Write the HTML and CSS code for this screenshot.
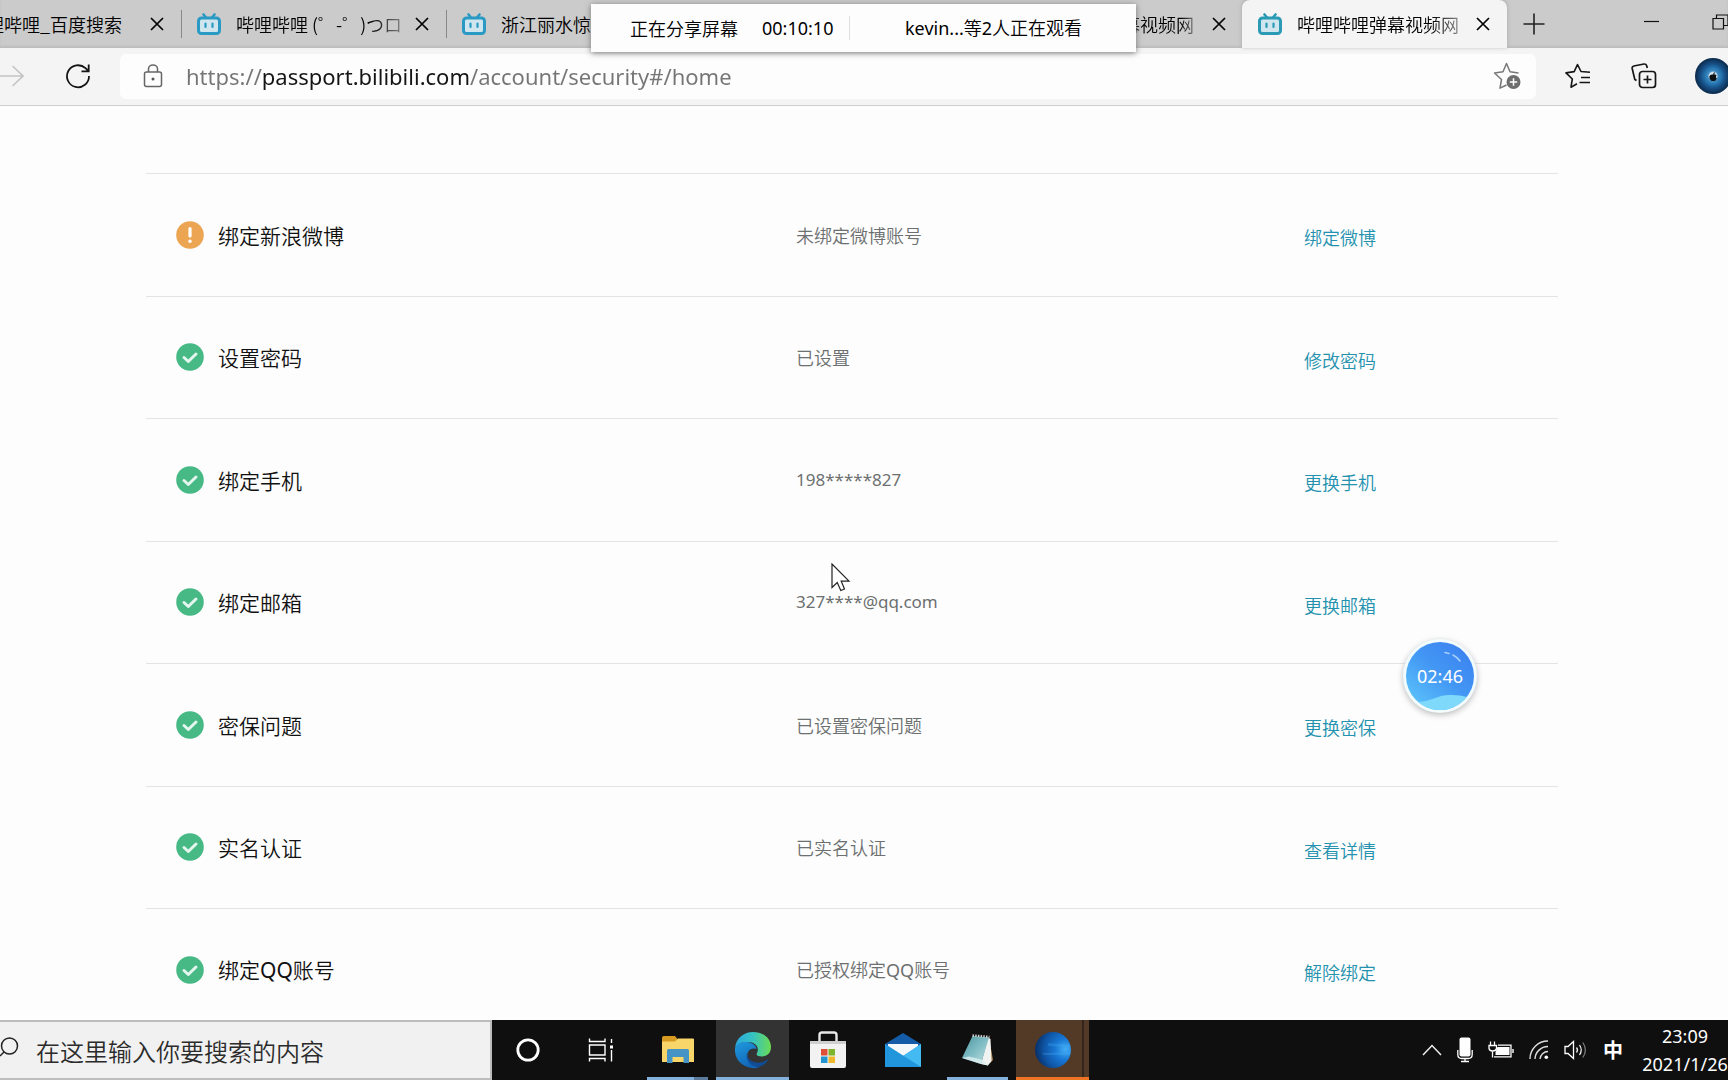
FILE: index.html
```html
<!DOCTYPE html>
<html lang="zh-CN">
<head>
<meta charset="utf-8">
<title>哔哩哔哩弹幕视频网</title>
<link rel="stylesheet" href="styles.css">
</head>
<body>
<svg class="defs" aria-hidden="true">
  <symbol id="tv" viewBox="0 0 24 22">
    <path d="M6.500 1.500 9 4.500M17.500 1.500 15 4.500" fill="none" stroke="currentColor" stroke-width="2.600" stroke-linecap="round"/>
    <rect x="1.500" y="5" width="21" height="15.500" rx="3" fill="#cfe6ee" stroke="currentColor" stroke-width="3"/>
    <path d="M8.500 10.500v3.500M15.500 10.500v3.500" stroke="currentColor" stroke-width="2.200" stroke-linecap="round"/>
  </symbol>
  <symbol id="close" viewBox="0 0 14 14">
    <path d="M1 1 13 13M13 1 1 13" fill="none" stroke="currentColor" stroke-width="1.700"/>
  </symbol>
  <symbol id="ok" viewBox="0 0 28 28">
    <circle cx="14" cy="14" r="13.800" fill="#46b985"/>
    <path d="M8 14.500 12.300 18.500 20 11" fill="none" stroke="#e4f6ee" stroke-width="3" stroke-linecap="round" stroke-linejoin="round"/>
  </symbol>
  <symbol id="warn" viewBox="0 0 28 28">
    <circle cx="14" cy="14" r="13.800" fill="#eba553"/>
    <path d="M14 7.500v7.500" stroke="#fff" stroke-width="3.200" stroke-linecap="round"/>
    <circle cx="14" cy="20.300" r="1.700" fill="#fff"/>
  </symbol>
</svg>

<header class="browser">
  <div class="tabstrip">
    <div class="tabs">
      <div class="tab tab-first"><span class="tab-title">哔哩哔哩_百度搜索</span><button class="icon-btn" aria-label="关闭"><svg width="14" height="14"><use href="#close"/></svg></button></div>
      <div class="tab"><svg class="favicon" width="24" height="22"><use href="#tv"/></svg><span class="tab-title fade">哔哩哔哩 (゜-゜)つロ</span><button class="icon-btn" aria-label="关闭"><svg width="14" height="14"><use href="#close"/></svg></button></div>
      <div class="tab"><svg class="favicon" width="24" height="22"><use href="#tv"/></svg><span class="tab-title">浙江丽水惊</span></div>
      <div class="tab"></div>
      <div class="tab tab-covered"><span class="tab-title fade">幕视频网</span><button class="icon-btn" aria-label="关闭"><svg width="14" height="14"><use href="#close"/></svg></button></div>
      <div class="tab active"><svg class="favicon" width="24" height="22"><use href="#tv"/></svg><span class="tab-title fade">哔哩哔哩弹幕视频网</span><button class="icon-btn" aria-label="关闭"><svg width="14" height="14"><use href="#close"/></svg></button></div>
    </div>
    <button class="icon-btn new-tab" aria-label="新建标签页"><svg width="22" height="22" viewBox="0 0 22 22"><path d="M11 0.500v21M0.500 11h21" stroke="#222" stroke-width="1.600"/></svg></button>
    <div class="window-btns">
      <button class="icon-btn" aria-label="最小化"><svg width="16" height="16" viewBox="0 0 16 16"><path d="M0 7.500h15" stroke="#111" stroke-width="1.200"/></svg></button>
      <button class="icon-btn" aria-label="还原"><svg width="16" height="16" viewBox="0 0 16 16"><path d="M1 4.500h10.500V15H1zM4.500 4.500V1H16v10.500h-4" fill="none" stroke="#111" stroke-width="1.200"/></svg></button>
    </div>
  </div>

  <div class="toolbar">
    <button class="icon-btn forward" aria-label="前进"><svg width="24" height="22" viewBox="0 0 24 22"><path d="M0 11h23M12.500 1 23 11 12.500 21" fill="none" stroke="#c4c4c4" stroke-width="1.600"/></svg></button>
    <button class="icon-btn reload" aria-label="刷新"><svg width="26" height="26" viewBox="0 0 26 26"><path d="M24 13A11 11 0 1 1 20.500 5.200L23.500 8M23.700 1.500V8.300H16.500" fill="none" stroke="#151515" stroke-width="1.800"/></svg></button>
    <label class="omnibox">
      <svg width="20" height="24" viewBox="0 0 20 24"><rect x="1.500" y="8" width="17" height="14.500" rx="2" fill="none" stroke="#666" stroke-width="1.500"/><path d="M5.500 8V5a4.500 4 0 0 1 9 0v3" fill="none" stroke="#666" stroke-width="1.500"/><circle cx="10" cy="15" r="1.500" fill="#555"/></svg>
      <input class="url" type="text" aria-label="地址栏" value="https://passport.bilibili.com/account/security#/home">
      <button class="icon-btn" aria-label="添加到收藏夹"><svg width="28" height="28" viewBox="0 0 28 28"><path d="M13.500 23 7 26.200 8.500 17.500 1.500 11 10 9.800 13.500 1.500 17 9.800 25.500 11" fill="none" stroke="#777" stroke-width="1.500" stroke-linejoin="round"/><circle cx="20.500" cy="20" r="7" fill="#6e6e6e"/><path d="M20.500 16.300v7.400M16.800 20h7.400" stroke="#fff" stroke-width="1.500"/></svg></button>
    </label>
    <button class="icon-btn favorites" aria-label="收藏夹"><svg width="26" height="26" viewBox="0 0 26 26"><path d="M12 20.800 6 24.200 7.300 16 1 9.900 9.200 8.600 12.500 1.500 16 8.500 25 9.300M16 14.500h9M14.500 19.500h10.500" fill="none" stroke="#151515" stroke-width="1.600" stroke-linejoin="round"/></svg></button>
    <button class="icon-btn collections" aria-label="集锦"><svg width="26" height="26" viewBox="0 0 26 26"><rect x="8.500" y="8.500" width="16" height="16" rx="3" fill="none" stroke="#151515" stroke-width="1.700"/><path d="M16.500 12.500v8M12.500 16.500h8M5.500 17.500 3.800 16.500 1.200 5.500Q0.800 3.500 2.800 3L13 1Q15 0.800 15.600 2.600L16.300 5" fill="none" stroke="#151515" stroke-width="1.700"/></svg></button>
    <button class="icon-btn avatar" aria-label="个人资料"><svg width="8" height="9" viewBox="0 0 8 9"><path d="M4 2.500Q4 .5 6 0 6 2 4 2.500Q6 1.800 7.500 3.200 6 5 7.800 6.500 6.500 9 5.500 9H2.500Q0 7 .3 4.500 1 2 4 2.500z" fill="#0c1116"/></svg></button>
  </div>
</header>

<div class="share-bar">
  <span>正在分享屏幕</span>
  <span class="share-time">00:10:10</span>
  <span class="share-viewers"><span class="latin">kevin...</span>等<span class="latin">2</span>人正在观看</span>
</div>

<main class="page">
  <ul class="settings">
    <li class="row"><h2 class="name"><svg width="28" height="28"><use href="#warn"/></svg>绑定新浪微博</h2><p class="value">未绑定微博账号</p><a class="action" href="#weibo">绑定微博</a></li>
    <li class="row"><h2 class="name"><svg width="28" height="28"><use href="#ok"/></svg>设置密码</h2><p class="value">已设置</p><a class="action" href="#password">修改密码</a></li>
    <li class="row"><h2 class="name"><svg width="28" height="28"><use href="#ok"/></svg>绑定手机</h2><p class="value masked">198*****827</p><a class="action" href="#phone">更换手机</a></li>
    <li class="row"><h2 class="name"><svg width="28" height="28"><use href="#ok"/></svg>绑定邮箱</h2><p class="value masked">327****@qq.com</p><a class="action" href="#mail">更换邮箱</a></li>
    <li class="row"><h2 class="name"><svg width="28" height="28"><use href="#ok"/></svg>密保问题</h2><p class="value">已设置密保问题</p><a class="action" href="#question">更换密保</a></li>
    <li class="row"><h2 class="name"><svg width="28" height="28"><use href="#ok"/></svg>实名认证</h2><p class="value">已实名认证</p><a class="action" href="#realname">查看详情</a></li>
    <li class="row"><h2 class="name"><svg width="28" height="28"><use href="#ok"/></svg><span>绑定<span class="latin">QQ</span>账号</span></h2><p class="value">已授权绑定<span class="latin">QQ</span>账号</p><a class="action" href="#qq">解除绑定</a></li>
  </ul>
</main>

<div class="timer-ball">
  <svg class="ball-art" width="68" height="68" viewBox="0 0 68 68" aria-hidden="true">
    <defs>
      <linearGradient id="ball" x1="0.900" y1="0.100" x2="0.200" y2="0.900"><stop offset="0" stop-color="#3b82f0"/><stop offset="0.500" stop-color="#4397f4"/><stop offset="1" stop-color="#58bdfa"/></linearGradient>
      <clipPath id="ballclip"><circle cx="34" cy="34" r="34"/></clipPath>
    </defs>
    <g clip-path="url(#ballclip)">
      <rect width="68" height="68" fill="url(#ball)"/>
      <path d="M10 60C26 60 32 52 46 53Q56 53 64 56V68H10z" fill="#7fd9fb"/>
    </g>
    <path d="M39 10.500 43 11.500M47 13Q51 15 54 19" stroke="#a5cffb" stroke-width="1.600" fill="none" stroke-linecap="round"/>
  </svg>
  <span class="ball-time">02:46</span>
</div>

<svg class="pointer" width="20" height="30" viewBox="0 0 20 30" aria-hidden="true"><path d="M1 1V24.500L6.200 19.500 9.800 27.500 13.500 26 10.200 18.200H18z" fill="#fff" stroke="#222" stroke-width="1.200"/></svg>

<footer class="taskbar">
  <label class="search">
    <svg width="19" height="20" viewBox="0 0 19 20"><circle cx="9.500" cy="9" r="8" fill="none" stroke="#222" stroke-width="1.500"/><path d="M4 15 0 19" stroke="#222" stroke-width="1.500"/></svg>
    <input type="search" aria-label="搜索" placeholder="在这里输入你要搜索的内容">
  </label>
  <nav class="apps">
    <button class="app" aria-label="Cortana"><svg width="26" height="26" viewBox="0 0 26 26"><circle cx="13" cy="13" r="10.200" fill="none" stroke="#fff" stroke-width="2.800"/></svg></button>
    <button class="app" aria-label="任务视图"><svg width="26" height="24" viewBox="0 0 26 24"><path d="M1.500 0.500V3.500H17V0.500M1.500 23.500V20.500H17V23.500M1.500 7h15.500v10H1.500zM23.500 1v4M23.500 12v11.500" fill="none" stroke="#fff" stroke-width="1.400"/><rect x="22" y="7.500" width="3" height="3" fill="#fff"/></svg></button>
    <button class="app running grouped" aria-label="文件资源管理器"><svg width="34" height="30" viewBox="0 0 34 30"><path d="M1 3Q1 1 3 1h11l2.500 3v5H1z" fill="#d79b22"/><path d="M1 6.500H14L17 3.500H32a1 1 0 0 1 1 1V27H1z" fill="#f9d66a"/><path d="M6 28V15.500a1.500 1.500 0 0 1 1.500-1.500h19a1.500 1.500 0 0 1 1.500 1.500V28h-5.500v-6h-11v6z" fill="#4694c6"/></svg></button>
    <button class="app running current" aria-label="Microsoft Edge"><svg width="38" height="38" viewBox="0 0 38 38">
      <defs>
        <linearGradient id="e1" x1="0" y1="0.500" x2="1" y2="0.500"><stop offset="0" stop-color="#2aa7dd"/><stop offset="0.500" stop-color="#36c2c2"/><stop offset="1" stop-color="#6bdc52"/></linearGradient>
        <linearGradient id="e2" x1="0" y1="0" x2="0.500" y2="1"><stop offset="0" stop-color="#1f9be0"/><stop offset="1" stop-color="#1264b5"/></linearGradient>
      </defs>
      <path d="M1 17C2 7 10 1 19 1c11 0 18 7 18 15 0 6-4 9.500-9 9.500-4 0-6.500-1-5-3.500 3-6-2-11-9-11C8 11 3 13 1 17z" fill="url(#e1)"/>
      <path d="M1 17C3 12.500 8 10.500 13 11c5 .5 9 3 9.500 7-5-2-10 2-9 7.500C14.500 32 20 36 26 35.500 23.500 37 21 37.500 18 37 7 36 0 27 1 17z" fill="url(#e2)"/>
      <path d="M13 22c0 7 7 10.500 13 9.500 4-.5 7-2.500 9-4-2 4-6 7.500-10 8.500C17 36.500 11 29 13 22z" fill="#114d94"/>
    </svg></button>
    <button class="app" aria-label="Microsoft Store"><svg width="36" height="38" viewBox="0 0 36 38"><path d="M9.500 13V4a2.500 2.500 0 0 1 2.500-2.500h12A2.500 2.500 0 0 1 26.500 4v9" fill="none" stroke="#e9e9e9" stroke-width="2.400"/><path d="M0 10h36v25a2 2 0 0 1-2 2H2a2 2 0 0 1-2-2z" fill="#f2f2f2"/><path d="M0 10h36v3H0z" fill="#cfcfcf"/><path d="M11 18h6.500v6.500H11z" fill="#dd5037"/><path d="M18.500 18H25v6.500h-6.500z" fill="#7db52c"/><path d="M11 25.500h6.500V32H11z" fill="#2294d0"/><path d="M18.500 25.500H25V32h-6.500z" fill="#f0b92b"/></svg></button>
    <button class="app" aria-label="邮件"><svg width="38" height="36" viewBox="0 0 38 36"><path d="M1 12 19 1 37 12V20H1z" fill="#155ca8"/><path d="M4 12h30v10L19 26 4 22z" fill="#f5f8fb"/><path d="M1 12 19 24 37 12V34a1 1 0 0 1-1 1H2a1 1 0 0 1-1-1z" fill="#2fa6e8"/><path d="M1 34.500 19 24 37 12V34a1 1 0 0 1-1 1z" fill="#43baf1"/><path d="M1 12 37 35H2a1 1 0 0 1-1-1z" fill="#2196dc"/></svg></button>
    <button class="app running" aria-label="记事本"><svg width="34" height="34" viewBox="0 0 34 34">
      <defs><linearGradient id="pad" x1="0" y1="0" x2="1" y2="1"><stop offset="0" stop-color="#4d959d"/><stop offset="0.500" stop-color="#7fbcc4"/><stop offset="1" stop-color="#c4e2e4"/></linearGradient></defs>
      <path d="M28 4 32 27 29 30 25 28z" fill="#a9834a"/><path d="M27 4.500 29.500 6 30.500 28 27 32.500 20 31z" fill="#f0f3f2"/><path d="M11.500 3 28 4.500 20 31 1 25z" fill="url(#pad)"/><path d="M1 25 20 31 27 32.500 22 27 8 23.500z" fill="#dceff0" fill-opacity="0.800"/><path d="M11.500 2.500 28.500 4" stroke="#ccc" stroke-width="2.500" stroke-dasharray="1.500 1.200"/></svg></button>
    <button class="app running alert" aria-label="屏幕共享"><svg width="38" height="38" viewBox="0 0 38 38">
      <defs><radialGradient id="orb" cx="0.850" cy="0.480" r="0.850"><stop offset="0" stop-color="#43aef5"/><stop offset="0.350" stop-color="#1877d4"/><stop offset="0.700" stop-color="#0f55a6"/><stop offset="1" stop-color="#082f66"/></radialGradient></defs>
      <circle cx="19" cy="19" r="18" fill="url(#orb)"/><path d="M14 12 35 13.500 36.500 16 14 15zM8 22 36.500 21 36 24 10 24z" fill="#4ab4f8" fill-opacity="0.250"/></svg></button>
  </nav>
  <div class="tray">
    <button class="icon-btn" aria-label="显示隐藏的图标"><svg width="20" height="12" viewBox="0 0 20 12"><path d="M1 11 10 1.500 19 11" fill="none" stroke="#eee" stroke-width="1.500"/></svg></button>
    <button class="icon-btn" aria-label="麦克风"><svg width="16" height="26" viewBox="0 0 16 26"><rect x="2.500" y="0.500" width="11" height="19" rx="2" fill="#fff"/><path d="M0.800 13v4.500Q0.800 21.500 5 21.500h6q4.200 0 4.200-4V13M8 21.500V24.500M4 24.500h8" fill="none" stroke="#fff" stroke-width="1.300"/></svg></button>
    <button class="icon-btn" aria-label="电池"><svg width="26" height="18" viewBox="0 0 26 18"><path d="M2.500 0.500v4M6.500 0.500v4M1 4.500h7.500v3Q8 10 4.500 10 1.500 10 1 7.500zM4.500 10v6.500" fill="none" stroke="#fff" stroke-width="1.300"/><path d="M10 4.200h13V15.800H6" fill="none" stroke="#fff" stroke-width="1.300"/><path d="M9.500 6h12v8H7.500v-3z" fill="#fff"/><path d="M25 8v4" stroke="#fff" stroke-width="1.400"/></svg></button>
    <button class="icon-btn" aria-label="网络"><svg width="20" height="20" viewBox="0 0 20 20"><path d="M1 19A18 18 0 0 1 19 1M6 19A13 13 0 0 1 19 6.500M11 19a8 8 0 0 1 8-7.500" fill="none" stroke="#ddd" stroke-width="1.400"/><circle cx="17.300" cy="17.300" r="1.800" fill="#fff"/></svg></button>
    <button class="icon-btn" aria-label="音量"><svg width="24" height="20" viewBox="0 0 24 20"><path d="M1 6.500h3L9.500 1.500v17L4 13.500H1z" fill="none" stroke="#fff" stroke-width="1.300"/><path d="M12.500 7.500Q14.500 10 12.500 12.500M15.500 5Q19 10 15.500 15" fill="none" stroke="#eee" stroke-width="1.300"/><path d="M18.800 2.500Q24 10 18.800 17.500" fill="none" stroke="#777" stroke-width="1.300"/></svg></button>
    <button class="ime">中</button>
    <div class="clock"><time>23:09</time><time>2021/1/26</time></div>
  </div>
</footer>
</body>
</html>
```
FILE: styles.css
```css
* { box-sizing: border-box; }

body {
  margin: 0;
  height: 100vh;
  display: flex;
  flex-direction: column;
  overflow: hidden;
  position: relative;
  background: #fdfdfd;
  color: #111;
  font: 350 18px/24px "Noto Sans CJK SC", sans-serif;
}

button, input { font: inherit; color: inherit; border: 0; background: none; padding: 0; }
svg { display: block; flex: none; }
.defs { position: absolute; width: 0; height: 0; }
.icon-btn { display: flex; flex: none; align-items: center; justify-content: center; }
.latin { font-family: "Noto Sans", sans-serif; font-weight: 400; }

/* Browser chrome */
.tabstrip {
  display: flex;
  height: 48px;
  background: #cbcbcb;
  box-shadow: inset 0 -2px 2px #bdbdbd;
}
.tabs { display: flex; flex: none; }
.tab {
  display: flex;
  align-items: center;
  width: 265px;
  padding: 0 16px 1px 15px;
  position: relative;
  color: #000;
}
.tab::after {
  content: "";
  position: absolute;
  right: 0;
  top: 10px;
  width: 1px;
  height: 28px;
  background: #888;
}
.tab:nth-child(n+5)::after { display: none; }
.tab-first { width: 182px; justify-content: flex-end; overflow: hidden; padding-right: 18px; }
.tab-first .tab-title { flex: none; margin-right: 28px; }
.favicon { color: #2a9ac4; margin-right: 15px; }
.tab-title { white-space: nowrap; overflow: hidden; }
.fade { width: 164px; margin-right: 15px; flex: none; mask-image: linear-gradient(90deg, #000 82%, #0006); }
.tab-covered { justify-content: flex-end; }
.tab-covered .fade { width: 72px; margin-right: 18px; }
.active {
  background: #f4f4f4;
  border-radius: 8px 8px 0 0;
  box-shadow: 0 -1px 4px #aaa;
  padding-left: 16px;
}
.active .favicon { color: #2b9ab4; }
.new-tab { width: 54px; padding-bottom: 1px; }
.window-btns { display: flex; margin-left: auto; gap: 52px; padding-bottom: 4px; }

.toolbar {
  display: flex;
  align-items: center;
  height: 58px;
  background: #f4f4f4;
  border-bottom: 1px solid #cdcdcd;
  padding-bottom: 1px;
}
.forward { width: 24px; }
.reload { width: 26px; margin: 0 29px 0 41px; }
.omnibox {
  flex: 1;
  display: flex;
  align-items: center;
  height: 45px;
  padding: 0 15px 0 23px;
  background: #fdfdfd;
  border-radius: 6px;
}
.url {
  flex: 1;
  min-width: 0;
  height: 36px;
  margin-left: 23px;
  outline: 0;
  font: 400 22px/32px "Noto Sans", sans-serif;
  color: transparent;
  background: linear-gradient(90deg, #757575 76px, #151515 76px 284px, #757575 284px);
  background-clip: text;
  -webkit-background-clip: text;
}
.favorites { margin-left: 29px; }
.collections { margin: 0 38px 0 40px; }
.avatar {
  width: 36px;
  height: 36px;
  margin-right: -3px;
  border-radius: 50%;
  background: radial-gradient(circle, #d5e6f0 0 14%, #3f8cc4 20%, #2370ab 34%, #174f86 48%, #0a2746 72%);
}

.share-bar {
  position: absolute;
  z-index: 2;
  left: 591px;
  top: 4px;
  width: 545px;
  height: 48px;
  display: flex;
  align-items: center;
  padding: 0 0 1px 39px;
  background: #fdfdfd;
  box-shadow: 0 1px 6px #777;
  color: #000;
}
.share-time { margin-left: 24px; width: 88px; border-right: 1px solid #ddd; font-family: "Noto Sans", sans-serif; font-weight: 400; }
.share-viewers { margin-left: 55px; }

/* Account settings */
.page { flex: 1; min-height: 0; overflow: hidden; padding: 67px 170px 0 146px; }
.settings { list-style: none; margin: 0; padding: 0; }
.row {
  display: grid;
  grid-template-columns: 620fr 508fr 254fr;
  align-items: center;
  height: 123px;
  padding: 0 0 1px 30px;
  border-top: 1px solid #e4e4e4;
}
.row:nth-child(even) { height: 122px; }
.name { display: flex; align-items: center; gap: 14px; margin: 0; font-size: 21px; line-height: 32px; font-weight: 350; color: #111; }
.value { margin: 0; color: #6c7070; }
.masked { font: 400 17px/24px "Noto Sans", sans-serif; }
.action { padding-top: 5px; color: #2492ae; text-decoration: none; }

.timer-ball {
  position: absolute;
  right: 251px;
  top: 639px;
  width: 74px;
  height: 74px;
  padding: 3px;
  border-radius: 50%;
  background: #f2fbfd;
  box-shadow: 0 2px 6px #bbb;
  display: grid;
  place-items: center;
}
.ball-art, .ball-time { grid-area: 1 / 1; }
.ball-time { z-index: 1; color: #fff; font: 400 18px/24px "Noto Sans", sans-serif; }

.pointer { position: absolute; left: 831px; top: 563px; }

/* Taskbar */
.taskbar { display: flex; height: 60px; background: #0f0f0f; color: #fff; }
.search {
  display: flex;
  align-items: center;
  width: 492px;
  background: #f1f1f1;
  border: solid #bdbdbd;
  border-width: 2px 2px 2px 0;
}
.search svg { margin-bottom: 6px; }
.search input { flex: 1; min-width: 0; height: 40px; margin-left: 17px; font-size: 24px; outline: 0; }
.search input::placeholder { color: #2b2b2b; opacity: 1; }
.apps { display: flex; gap: 2px; }
.app { position: relative; display: grid; place-items: center; width: 73px; height: 60px; }
.app:nth-child(-n+2) { width: 71px; }
.app:nth-child(3) { margin-left: 3px; }
.running::after {
  content: "";
  position: absolute;
  left: 6px;
  right: 6px;
  bottom: 0;
  height: 3px;
  background: #83b1db;
}
.grouped::after { background: linear-gradient(90deg, #83b1db 47px, #5b7a9c 47px); }
.current { background: #333; }
.current::after, .alert::after { left: 0; right: 0; }
.alert { background: linear-gradient(90deg, #523a27 66px, #33251b 66px 68px, #523a27 68px); }
.alert::after { background: #ee7424; }
.tray { display: flex; align-items: center; margin-left: auto; gap: 15px; }
.ime { font-size: 20px; font-weight: 700; line-height: 24px; width: 20px; }
.clock {
  display: flex;
  flex-direction: column;
  align-items: center;
  width: 90px;
  margin: 0 -2px 1px 2px;
  font: 400 18px/28px "Noto Sans", sans-serif;
}
```
